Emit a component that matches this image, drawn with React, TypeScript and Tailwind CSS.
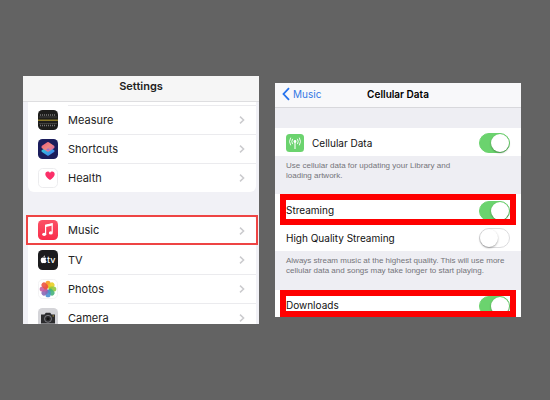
import clsx from "clsx";

type SettingsItem = {
  label: string;
  icon: React.ReactNode;
  highlighted?: boolean;
};

type ToggleProps = {
  id: string;
  defaultChecked?: boolean;
};

const MeasureIcon = () => (
  <svg viewBox="0 0 20 20" className="size-5 shrink-0" aria-hidden="true">
    <rect width="20" height="20" rx="4.5" fill="#1d1d1b" />
    <path d="M2 5h16M2 15.5h16" stroke="#777" strokeWidth="1.6" strokeDasharray="1 1" />
    <path d="M1 7h18M1 13.5h18" stroke="#4a4a48" strokeWidth="0.8" />
    <path d="M0 10.2h20" stroke="#b09a2c" strokeWidth="1.1" />
  </svg>
);

const ShortcutsIcon = () => (
  <svg viewBox="0 0 20 20" className="size-5 shrink-0" aria-hidden="true">
    <defs>
      <linearGradient id="shortcutsTop" x1="0" y1="0" x2="1" y2="1">
        <stop offset="0" stopColor="#f0567c" />
        <stop offset="0.5" stopColor="#ee8580" />
        <stop offset="1" stopColor="#c861b8" />
      </linearGradient>
      <linearGradient id="shortcutsBottom" x1="0" y1="0" x2="1" y2="1">
        <stop offset="0" stopColor="#32d5d8" />
        <stop offset="1" stopColor="#4277ee" />
      </linearGradient>
    </defs>
    <rect width="20" height="20" rx="4.5" fill="#1b1d5c" />
    <path d="M3.6 11.2 10 7.600l6.400 3.600v1.600L10.800 16.600q-.8.5-1.600 0L3.600 12.800Z" fill="url(#shortcutsBottom)" />
    <path d="M3.600 7 9.200 3.200q.8-.5 1.600 0L16.400 7v2L10.800 12.400q-.8.500-1.600 0L3.600 9Z" fill="url(#shortcutsTop)" />
    <path d="M8.200 10.400 10 9.200l1.800 1.200L10 11.600Z" fill="#a070c8" />
  </svg>
);

const HealthIcon = () => (
  <svg viewBox="0 0 20 20" className="size-5 shrink-0" aria-hidden="true">
    <rect x="0.5" y="0.5" width="19" height="19" rx="4.2" fill="#fff" stroke="#ececee" />
    <path
      d="M12 12C9.500 10.200 7.300 8.500 7.300 6.200 7.300 3.300 10.700 2.700 12 4.900 13.300 2.700 16.700 3.300 16.700 6.200 16.700 8.500 14.500 10.200 12 12Z"
      fill="#fb2f68"
    />
  </svg>
);

const MusicIcon = () => (
  <svg viewBox="0 0 20 20" className="size-5 shrink-0" aria-hidden="true">
    <defs>
      <linearGradient id="musicBg" x1="0" y1="0" x2="0" y2="1">
        <stop offset="0" stopColor="#fb5266" />
        <stop offset="1" stopColor="#f92c4b" />
      </linearGradient>
    </defs>
    <rect width="20" height="20" rx="4.5" fill="url(#musicBg)" />
    <path d="M7.600 14V5.200L14.200 3.800V12.600" fill="none" stroke="#fff" strokeWidth="1.200" />
    <path d="M7.600 5.900 14.200 4.500" stroke="#fff" strokeWidth="2" />
    <ellipse cx="6.200" cy="14.300" rx="2" ry="1.600" fill="#fff" />
    <ellipse cx="12.800" cy="12.900" rx="2" ry="1.600" fill="#fff" />
  </svg>
);

const TvIcon = () => (
  <svg viewBox="0 0 20 20" className="size-5 shrink-0" aria-hidden="true">
    <rect width="20" height="20" rx="4.5" fill="#1c1c1e" />
    <path
      d="M5.600 7.800C7 7.100 8 7.500 8.300 8.200 7.300 8.900 7.400 10.500 8.600 11.200 8.200 12.500 7.200 13.300 6.500 13.100 5.900 12.800 5.500 12.800 4.900 13.100 3.700 13.500 2.600 11.500 2.700 9.900 2.900 7.700 4.400 7.200 5.600 7.800ZM5.500 7.300C5.500 6.300 6.200 5.700 7 5.600 7 6.600 6.400 7.200 5.500 7.300Z"
      fill="#fff"
    />
    <text x="9" y="13" fill="#fff" fontSize="9" fontWeight="500" fontFamily="Inter, sans-serif">
      tv
    </text>
  </svg>
);

const petals = ["#f79a1e", "#e8cf23", "#93c83e", "#45b37c", "#4a8fd0", "#8a68b5", "#c55da0", "#ec5340"];

const PhotosIcon = () => (
  <svg viewBox="0 0 20 20" className="size-5 shrink-0" aria-hidden="true">
    <rect x="0.500" y="0.500" width="19" height="19" rx="4.200" fill="#fff" stroke="#f3f3f4" />
    {petals.map((color, index) => (
      <rect
        key={color}
        x="7.400"
        y="1.700"
        width="5.200"
        height="7.600"
        rx="2.600"
        fill={color}
        fillOpacity="0.9"
        transform={`rotate(${index * 45} 10 10)`}
      />
    ))}
  </svg>
);

const CameraIcon = () => (
  <svg viewBox="0 0 20 20" className="size-5 shrink-0" aria-hidden="true">
    <rect width="20" height="20" rx="4.500" fill="#d4d4d8" />
    <path d="M3 6.500h3.500L7.800 4.800h4.400L13.500 6.500H17V15.500H3Z" fill="#2b2b2d" />
    <circle cx="10" cy="10.800" r="3.500" fill="#2b2b2d" stroke="#85858a" strokeWidth="0.900" />
    <circle cx="10" cy="10.800" r="1.400" fill="#111" />
    <circle cx="15.200" cy="7.900" r="0.600" fill="#d8b43c" />
  </svg>
);

const CellularIcon = () => (
  <svg viewBox="0 0 18 18" className="size-[18px] shrink-0" aria-hidden="true">
    <rect width="18" height="18" rx="3.500" fill="#6bd36e" />
    <circle cx="9" cy="7.500" r="1.400" fill="#fff" />
    <path d="M9 8v7" stroke="#fff" strokeWidth="1.100" />
    <path
      d="M6.400 5.200Q5 7.500 6.400 9.800M11.600 5.200Q13 7.500 11.600 9.800M4.500 4Q2.300 7.500 4.500 11M13.500 4Q15.700 7.500 13.500 11"
      fill="none"
      stroke="#fff"
      strokeWidth="0.900"
      strokeLinecap="round"
    />
  </svg>
);

const appsTop: SettingsItem[] = [
  { label: "Measure", icon: <MeasureIcon /> },
  { label: "Shortcuts", icon: <ShortcutsIcon /> },
  { label: "Health", icon: <HealthIcon /> },
];

const appsBottom: SettingsItem[] = [
  { label: "Music", icon: <MusicIcon />, highlighted: true },
  { label: "TV", icon: <TvIcon /> },
  { label: "Photos", icon: <PhotosIcon /> },
  { label: "Camera", icon: <CameraIcon /> },
];

const SettingsRow = ({ label, icon, highlighted, divider }: SettingsItem & { divider: boolean }) => (
  <li className={clsx(highlighted && "-mx-0.5 border-2 border-[#ee4444]")}>
    <a
      href="#"
      className={clsx("flex items-center gap-2.5 pl-2.5", highlighted ? "h-[26px]" : "h-[29px]")}
    >
      {icon}
      <span
        className={clsx(
          "flex h-full grow items-center justify-between border-t pr-[11px]",
          divider ? "border-[#ebebee]" : "border-transparent",
        )}
      >
        {label}
        <svg viewBox="0 0 6 10" className="h-2.5 w-1.5" fill="none" aria-hidden="true">
          <path d="M1 1.600 4.600 5 1 8.400" stroke="#cbcbce" strokeWidth="1.500" />
        </svg>
      </span>
    </a>
  </li>
);

const SettingsPanel = () => (
  <section className="overflow-hidden bg-[#f1f1f6] text-[11px] text-[#222]">
    <header className="flex h-[26px] items-center justify-center border-b border-[#dedee0] bg-[#f6f6f6] pb-1">
      <h1 className="font-semibold">Settings</h1>
    </header>
    <ul className="ml-[5px] mr-[3px] rounded-b-md bg-white pt-[3px]">
      {appsTop.map((item) => (
        <SettingsRow key={item.label} {...item} divider />
      ))}
    </ul>
    <ul className="ml-[5px] mr-[3px] mt-[23px] h-[109px] rounded-t-md bg-white">
      {appsBottom.map((item, index) => (
        <SettingsRow key={item.label} {...item} divider={index > 1} />
      ))}
    </ul>
  </section>
);

const Toggle = ({ id, defaultChecked }: ToggleProps) => (
  <input
    id={id}
    type="checkbox"
    role="switch"
    defaultChecked={defaultChecked}
    className="flex h-5 w-[31px] shrink-0 appearance-none items-center rounded-full border border-[#dcdcde] bg-white before:size-[18px] before:rounded-full before:bg-white before:shadow-[0_1px_2px_rgba(0,0,0,0.35)] checked:justify-end checked:border-[#6bd36e] checked:bg-[#6bd36e]"
  />
);

const HighlightedToggleRow = ({ id, label, className }: { id: string; label: string; className: string }) => (
  <div
    className={clsx(
      "mx-[5px] flex items-center justify-between overflow-hidden border-[6px] border-[#fe0000] bg-white",
      className,
    )}
  >
    <label htmlFor={id}>{label}</label>
    <Toggle id={id} defaultChecked />
  </div>
);

const CellularPanel = () => (
  <section className="mt-[7px] self-start overflow-hidden bg-[#eeeef3] text-[10px] text-[#111]">
    <header className="grid h-[25px] grid-cols-[1fr_auto_1fr] items-center border-b border-[#d8d8dc] bg-[#f8f8fa] px-[7px] pb-0.5">
      <a href="#" className="flex items-center gap-[3px] text-[#3478e5]">
        <svg viewBox="0 0 8 14" className="h-3.5 w-2" fill="none" aria-hidden="true">
          <path d="M7 1.200 1.500 7 7 12.800" stroke="#2472ee" strokeWidth="1.800" />
        </svg>
        Music
      </a>
      <h2 className="font-semibold text-black">Cellular Data</h2>
    </header>
    <div className="mt-5 flex h-[28px] items-center gap-2 bg-white px-[11px] pt-0.5">
      <CellularIcon />
      <label htmlFor="cellular" className="grow">
        Cellular Data
      </label>
      <Toggle id="cellular" defaultChecked />
    </div>
    <p className="h-10 px-[11px] pt-[5px] font-['Liberation_Sans',sans-serif] text-[8px] leading-[10px] whitespace-nowrap text-[#74747a]">
      Use cellular data for updating your Library and
      <br />
      loading artwork.
    </p>
    <div className="bg-white">
      <HighlightedToggleRow id="streaming" label="Streaming" className="relative -mt-0.5 h-[31px] pt-0.5" />
      <div className="flex h-[26px] items-center justify-between px-[11px]">
        <label htmlFor="quality">High Quality Streaming</label>
        <Toggle id="quality" />
      </div>
    </div>
    <p className="h-[39px] px-[11px] pt-[5px] font-['Liberation_Sans',sans-serif] text-[8px] leading-[10px] whitespace-nowrap text-[#74747a]">
      Always stream music at the highest quality. This will use more
      <br />
      cellular data and songs may take longer to start playing.
    </p>
    <div className="bg-white">
      <HighlightedToggleRow id="downloads" label="Downloads" className="h-[27px] pt-1" />
    </div>
  </section>
);

export default function App() {
  return (
    <main className="grid min-h-screen grid-cols-[236fr_246fr] content-start gap-4 bg-[#636363] pt-[76px] pr-[29px] pl-[23px] font-['Inter',sans-serif]">
      <SettingsPanel />
      <CellularPanel />
    </main>
  );
}
